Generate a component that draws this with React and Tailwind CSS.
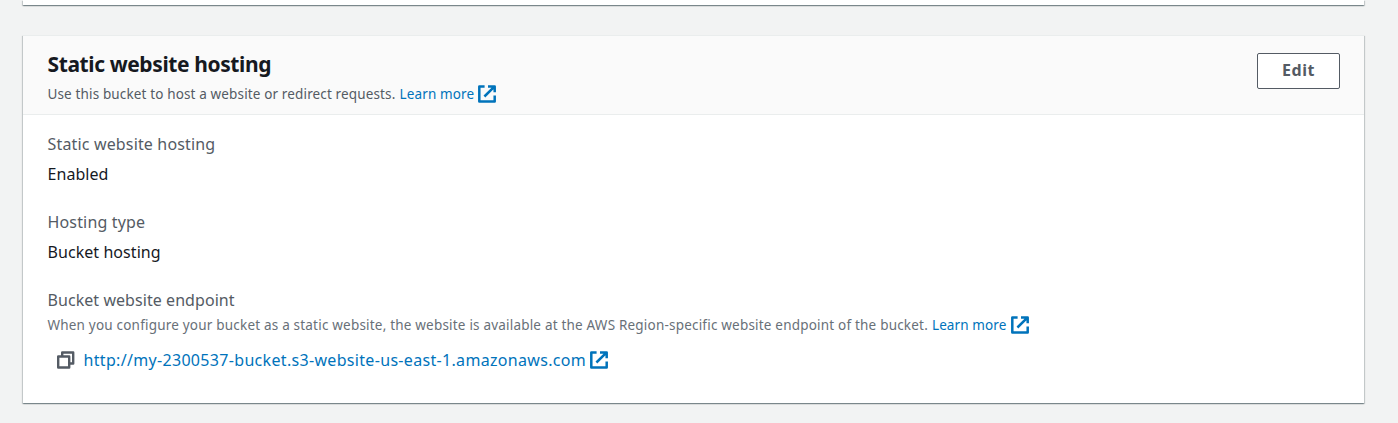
function ExternalIcon() {
  return (
    <svg className="block h-[18px] w-[18px] shrink-0 text-[#0073bb]" viewBox="0 0 18 18" fill="none" stroke="currentColor" strokeWidth="2.5" strokeLinejoin="round">
      <path d="M6.6 1.4H1.3v15.2h15.4v-6" />
      <path d="M10 1.4h6.7v5.8M16.4 1.7 6.4 11.5" />
    </svg>
  );
}

function CopyIcon() {
  return (
    <svg className="block h-[18px] w-[18px] shrink-0 text-[#545b64]" viewBox="0 0 18 18" fill="none" stroke="currentColor" strokeWidth="2.4" strokeLinejoin="round">
      <path d="M1.2 5.5h11v11h-11z" />
      <path d="M5.2 5.5v-4h11v11h-4" />
    </svg>
  );
}

function Field({ label, value }) {
  return (
    <div className="h-[78px] text-[16px] leading-[30px]">
      <div className="tracking-[0.16px] text-[#545b64]">{label}</div>
      <div className="tracking-[0.06px] text-[#16191f]">{value}</div>
    </div>
  );
}

const cardShadow =
  "shadow-[0_1px_1px_0_rgba(0,28,36,0.3),1px_1px_1px_0_rgba(0,28,36,0.15),-1px_1px_1px_0_rgba(0,28,36,0.15)]";

export default function App() {
  return (
    <div className="flex h-[423px] w-full flex-col overflow-hidden bg-[#f2f3f3] pr-[34px] pl-[23px] font-['Noto_Sans','Open_Sans',sans-serif] whitespace-nowrap">
      <div className={`h-[5px] shrink-0 bg-white ${cardShadow}`} />
      <section className={`mt-[30px] h-[368px] shrink-0 border-t border-[#eaeded] bg-white ${cardShadow}`}>
        <header className="flex h-[79px] items-start justify-between border-b border-[#eaeded] bg-[#fafafa] pr-6 pl-[24.5px]">
          <div className="pt-[14px]">
            <h2 className="text-[21px] leading-[28px] font-bold tracking-[-0.4px] text-[#16191f]">Static website hosting</h2>
            <p className="mt-[6px] flex h-5 items-center text-[13.5px] leading-5 tracking-[0.14px] text-[#545b64]">
              Use this bucket to host a website or redirect requests.
              <a className="ml-1 flex items-center gap-1 text-[#0073bb]">Learn more<ExternalIcon /></a>
            </p>
          </div>
          <button className="mt-[17px] h-9 w-[83px] rounded-[2px] border border-[#545b64] bg-white pb-0.5 text-[16px] leading-[32px] font-bold tracking-[0.5px] text-[#545b64]">
            Edit
          </button>
        </header>
        <div className="pt-[14px] pl-[24.5px]">
          <Field label="Static website hosting" value="Enabled" />
          <Field label="Hosting type" value="Bucket hosting" />
          <div className="text-[16px] leading-[30px] tracking-[0.06px] text-[#545b64]">Bucket website endpoint</div>
          <p className="flex h-5 items-center text-[13.5px] leading-5 tracking-[0.2px] text-[#687078]">
            When you configure your bucket as a static website, the website is available at the AWS Region-specific website endpoint of the bucket.
            <a className="ml-1 flex items-center gap-[5px] tracking-[0.1px] text-[#0073bb]">Learn more<ExternalIcon /></a>
          </p>
          <div className="mt-[10px] flex h-[30px] items-center pl-[9px] text-[16px] leading-[30px]">
            <CopyIcon />
            <a className="ml-[9px] flex items-center gap-1 tracking-[0.32px] text-[#0073bb]">
              http://my-2300537-bucket.s3-website-us-east-1.amazonaws.com
              <ExternalIcon />
            </a>
          </div>
        </div>
      </section>
    </div>
  );
}
